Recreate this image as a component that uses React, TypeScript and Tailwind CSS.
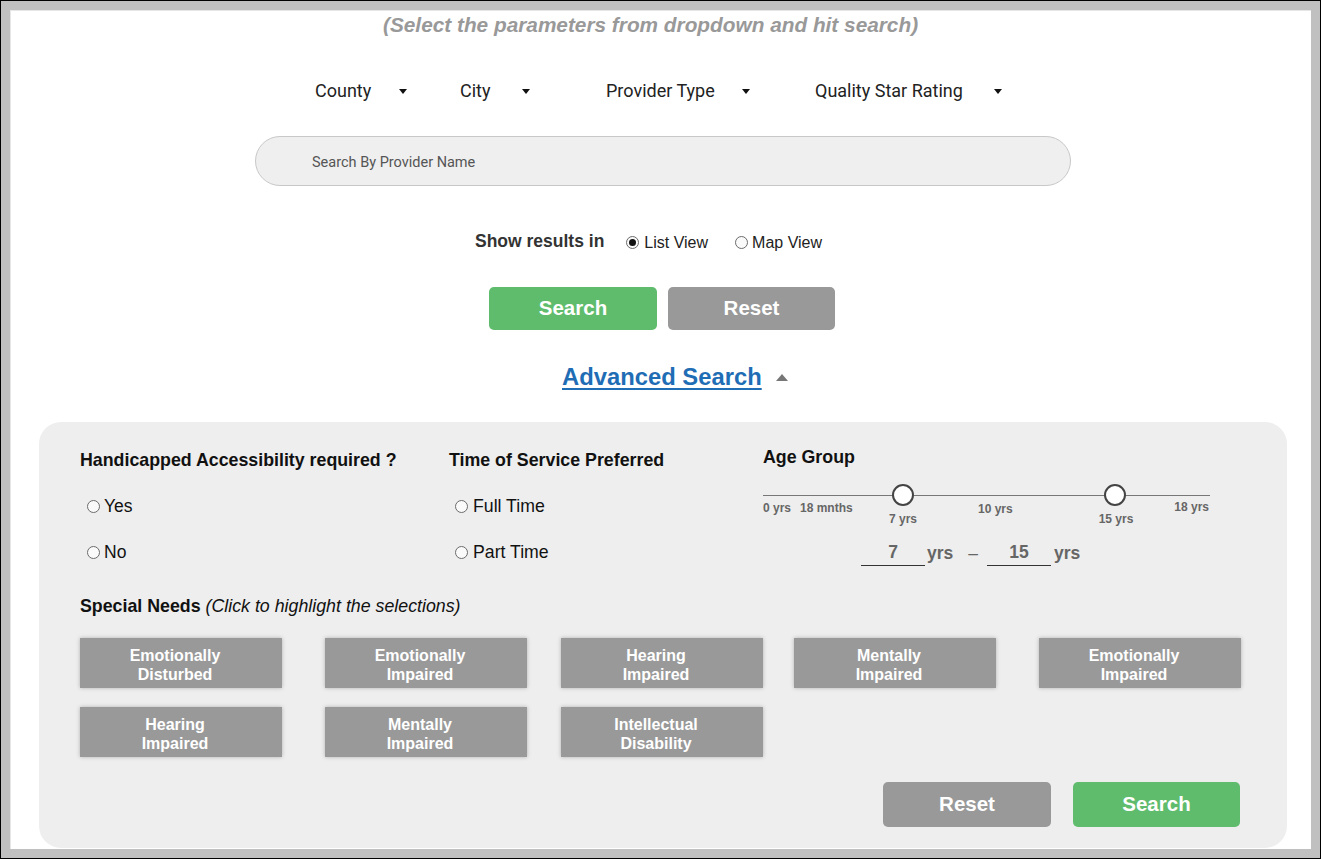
import React from 'react';

const chipsRow1 = [
  { top: 'Emotionally', bottom: 'Disturbed', ml: 'ml-0' },
  { top: 'Emotionally', bottom: 'Impaired', ml: 'ml-[43px]' },
  { top: 'Hearing', bottom: 'Impaired', ml: 'ml-[34px]' },
  { top: 'Mentally', bottom: 'Impaired', ml: 'ml-[31px]' },
  { top: 'Emotionally', bottom: 'Impaired', ml: 'ml-[43px]' },
];

const chipsRow2 = [
  { top: 'Hearing', bottom: 'Impaired', ml: 'ml-0' },
  { top: 'Mentally', bottom: 'Impaired', ml: 'ml-[43px]' },
  { top: 'Intellectual', bottom: 'Disability', ml: 'ml-[34px]' },
];

const dropdowns = [
  { label: 'County', text: 'w-[84px]', item: 'w-[145px]' },
  { label: 'City', text: 'w-[62px]', item: 'w-[146px]' },
  { label: 'Provider Type', text: 'w-[136px]', item: 'w-[209px]' },
  { label: 'Quality Star Rating', text: 'w-[179px]', item: 'w-[195px]' },
];

const Radio = ({ checked = false }: { checked?: boolean }) => (
  <span className="w-[13px] h-[13px] rounded-full border border-[#6b6b6b] bg-[#fafafa] flex items-center justify-center shrink-0">
    {checked && <span className="w-[7px] h-[7px] rounded-full bg-[#111]" />}
  </span>
);

const Chip = ({ top, bottom, ml }: { top: string; bottom: string; ml: string }) => (
  <div
    className={`${ml} w-[202px] h-[50px] bg-[#999999] shadow-[0_0_4px_rgba(0,0,0,0.25)] flex flex-col items-center justify-center pt-[3px] pr-[12px] text-white font-bold text-[16px] leading-[19px] text-center`}
  >
    <span>{top}</span>
    <span>{bottom}</span>
  </div>
);

const AgeSlider = () => (
  <div className="relative w-[447px] h-[44px] mt-[19px] text-[12px] leading-[14px] font-bold text-[#666]">
    <div className="absolute left-0 right-0 top-[8px] h-px bg-[#777]" />
    <div className="absolute left-[129px] top-[-3px] w-[22px] h-[22px] rounded-full bg-white border-2 border-[#444]" />
    <div className="absolute left-[341px] top-[-3px] w-[22px] h-[22px] rounded-full bg-white border-2 border-[#444]" />
    <span className="absolute left-0 top-[14px]">0 yrs</span>
    <span className="absolute left-[37px] top-[14px]">18 mnths</span>
    <span className="absolute left-[140px] top-[25px] -translate-x-1/2 whitespace-nowrap">7 yrs</span>
    <span className="absolute left-[215px] top-[15px]">10 yrs</span>
    <span className="absolute left-[353px] top-[25px] -translate-x-1/2 whitespace-nowrap">15 yrs</span>
    <span className="absolute right-[1px] top-[13px]">18 yrs</span>
  </div>
);

export default function App() {
  return (
    <div className="w-[1321px] h-[859px] border border-black bg-[#c0c0c0] p-[9px] font-['Liberation_Sans',Arial,sans-serif]">
      <div className="w-full h-full bg-white border-t border-l border-[#e6e6e6] overflow-hidden flex flex-col items-start">
        {/* hint */}
        <p className="mt-[1px] ml-[372px] text-[20.8px] leading-[26px] font-bold italic text-[#999999] whitespace-nowrap">
          (Select the parameters from dropdown and hit search)
        </p>

        {/* dropdowns */}
        <div className="mt-[41px] ml-[304px] flex font-['Roboto',sans-serif] text-[18px] leading-[24px] text-[#222]">
          {dropdowns.map((d) => (
            <div key={d.label} className={`${d.item} flex items-center`}>
              <span className={`${d.text} whitespace-nowrap`}>{d.label}</span>
              <span className="w-0 h-0 border-l-[4px] border-r-[4px] border-t-[5px] border-l-transparent border-r-transparent border-t-[#111]" />
            </div>
          ))}
        </div>

        {/* provider name */}
        <input
          className="mt-[33px] ml-[244px] w-[816px] h-[50px] rounded-full bg-[#efefef] border border-[#c8c8c8] pl-[56px] pt-[3px] font-['Roboto',sans-serif] text-[14.5px] text-[#555] placeholder:text-[#555] outline-none"
          placeholder="Search By Provider Name"
        />

        {/* view toggle */}
        <div className="mt-[44px] ml-[464px] flex items-center h-[22px]">
          <span className="text-[17.5px] font-bold text-[#333]">Show results in</span>
          <div className="ml-[22px] mt-[3px] flex items-center">
            <Radio checked />
            <span className="ml-[5px] text-[16px] text-[#222]">List View</span>
          </div>
          <div className="ml-[27px] mt-[3px] flex items-center">
            <Radio />
            <span className="ml-[4px] text-[16px] text-[#222]">Map View</span>
          </div>
        </div>

        {/* actions */}
        <div className="mt-[35px] ml-[478px] flex gap-[11px]">
          <button className="w-[168px] h-[43px] rounded-[5px] bg-[#5fbc6d] text-white text-[20.5px] font-bold">Search</button>
          <button className="w-[167px] h-[43px] rounded-[5px] bg-[#999999] text-white text-[20.5px] font-bold">Reset</button>
        </div>

        {/* advanced toggle */}
        <div className="mt-[33px] ml-[551px] flex items-center h-[28px]">
          <a className="text-[23.8px] leading-[28px] font-bold text-[#1f6db5] underline underline-offset-[3px] decoration-2">
            Advanced Search
          </a>
          <span className="ml-[14px] mt-[1px] w-0 h-0 border-l-[6px] border-r-[6px] border-b-[7px] border-l-transparent border-r-transparent border-b-[#777]" />
        </div>

        {/* advanced panel */}
        <div className="mt-[31px] ml-[28px] w-[1248px] h-[426px] shrink-0 rounded-[22px] bg-[#eeeeee] pl-[41px] pt-[27px] text-[#111]">
          <div className="flex h-[146px]">
            <div className="w-[369px]">
              <h3 className="text-[17.8px] leading-[22px] font-bold">Handicapped Accessibility required ?</h3>
              <div className="mt-[24px] pl-[7px] flex items-center h-[22px] gap-[4px]">
                <Radio />
                <span className="text-[17.5px]">Yes</span>
              </div>
              <div className="mt-[24px] pl-[7px] flex items-center h-[22px] gap-[4px]">
                <Radio />
                <span className="text-[17.5px]">No</span>
              </div>
            </div>

            <div className="w-[314px]">
              <h3 className="text-[17.8px] leading-[22px] font-bold">Time of Service Preferred</h3>
              <div className="mt-[24px] pl-[6px] flex items-center h-[22px] gap-[5px]">
                <Radio />
                <span className="text-[17.7px]">Full Time</span>
              </div>
              <div className="mt-[24px] pl-[6px] flex items-center h-[22px] gap-[5px]">
                <Radio />
                <span className="text-[17.7px]">Part Time</span>
              </div>
            </div>

            <div className="w-[447px] -mt-[3px]">
              <h3 className="text-[17.8px] leading-[22px] font-bold">Age Group</h3>
              <AgeSlider />
              <div className="mt-[8px] ml-[98px] flex items-end h-[27px] text-[17.5px] font-bold text-[#666]">
                <span className="w-[64px] h-[27px] border-b border-[#333] text-center leading-[26px]">7</span>
                <span className="ml-[2px] leading-[26px]">yrs</span>
                <span className="ml-[15px] leading-[26px] font-normal">–</span>
                <span className="ml-[9px] w-[64px] h-[27px] border-b border-[#333] text-center leading-[26px]">15</span>
                <span className="ml-[3px] leading-[26px]">yrs</span>
              </div>
            </div>
          </div>

          <p className="text-[17.8px] leading-[22px]">
            <span className="font-bold">Special Needs</span> <span className="italic">(Click to highlight the selections)</span>
          </p>

          <div className="mt-[21px] flex">
            {chipsRow1.map((c, i) => (
              <Chip key={i} {...c} />
            ))}
          </div>
          <div className="mt-[19px] flex">
            {chipsRow2.map((c, i) => (
              <Chip key={i} {...c} />
            ))}
          </div>

          <div className="mt-[25px] pr-[47px] flex justify-end gap-[22px]">
            <button className="w-[168px] h-[45px] rounded-[5px] bg-[#999999] text-white text-[20.5px] font-bold">Reset</button>
            <button className="w-[167px] h-[45px] rounded-[5px] bg-[#5fbc6d] text-white text-[20.5px] font-bold">Search</button>
          </div>
        </div>
      </div>
    </div>
  );
}
